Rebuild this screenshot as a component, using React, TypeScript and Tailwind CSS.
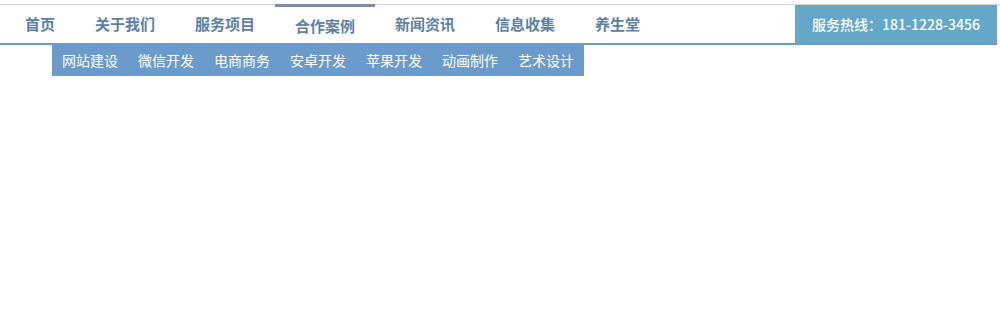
const mainNav = ['首页', '关于我们', '服务项目', '合作案例', '新闻资讯', '信息收集', '养生堂'];
const subNav = ['网站建设', '微信开发', '电商商务', '安卓开发', '苹果开发', '动画制作', '艺术设计'];

export default function App() {
  return (
    <div className="min-h-[314px] bg-white pt-1 font-['Noto_Sans_CJK_SC',sans-serif]">
      {/* top nav */}
      <div className="border-t border-[#d6d6d6]">
        <div className="mr-[3px] flex h-[40px] border-b-2 border-[#6b9bcf]">
          <ul className="flex pl-[5px]">
            {mainNav.map((item) =>
              item === '合作案例' ? (
                <li
                  key={item}
                  className="-mt-px flex items-center border-t-[3px] border-[#7b8ea6] px-5 pt-[3px] text-[15px] font-bold text-[#5b7fa6]"
                >
                  {item}
                </li>
              ) : (
                <li key={item} className="flex items-center px-5 text-[15px] font-bold text-[#5b7fa6]">
                  {item}
                </li>
              )
            )}
          </ul>
          <div className="ml-auto flex w-[202px] items-center justify-center bg-[#64a7c9] text-[14px] font-medium text-white">
            服务热线：181-1228-3456
          </div>
        </div>
      </div>

      {/* sub nav */}
      <ul className="ml-[52px] flex w-fit bg-[#6b9bcb]">
        {subNav.map((item) => (
          <li key={item} className="px-[10px] text-[14px] leading-[31px] text-white">
            {item}
          </li>
        ))}
      </ul>
    </div>
  );
}
